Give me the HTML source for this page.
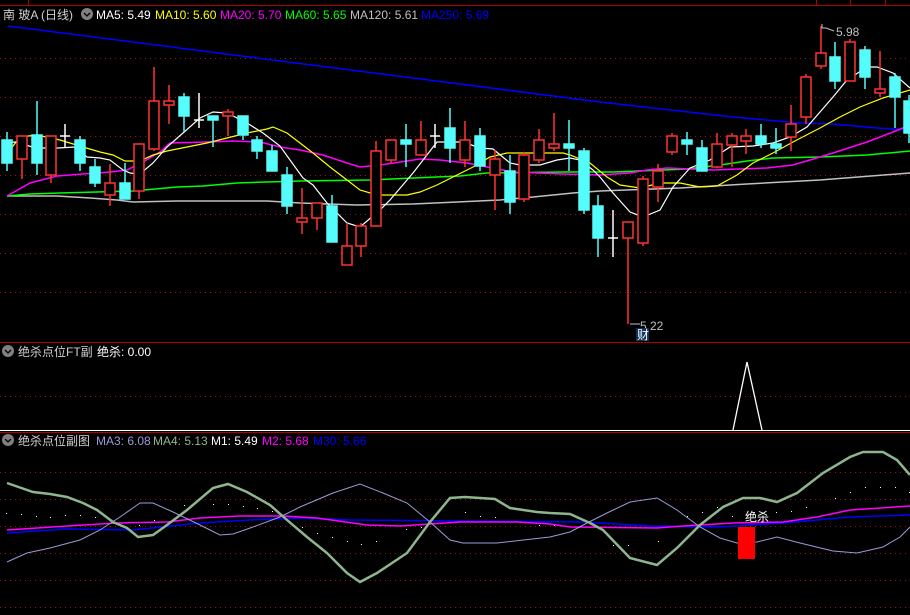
<!DOCTYPE html>
<html><head><meta charset="utf-8"><style>
html,body{margin:0;padding:0;background:#000;width:910px;height:615px;overflow:hidden}
svg{display:block}
text{font-family:"Liberation Sans","Noto Sans CJK SC",sans-serif;font-size:12px}
</style></head><body>
<svg width="910" height="615" viewBox="0 0 910 615" xmlns="http://www.w3.org/2000/svg">
<rect width="910" height="615" fill="#000"/>
<!-- top bar -->
<line x1="0" y1="5.5" x2="910" y2="5.5" stroke="#b00000"/>
<line x1="816.5" y1="0" x2="816.5" y2="5" stroke="#b00000"/>
<line x1="850.5" y1="0" x2="850.5" y2="5" stroke="#b00000"/>
<line x1="885.5" y1="0" x2="885.5" y2="5" stroke="#b00000"/>
<line x1="28.5" y1="0" x2="28.5" y2="5" stroke="#b00000"/>
<!-- grids -->
<g stroke="#a01010" stroke-dasharray="1 4">
<line x1="0" y1="58.5" x2="910" y2="58.5"/><line x1="0" y1="97.5" x2="910" y2="97.5"/>
<line x1="0" y1="136.5" x2="910" y2="136.5"/><line x1="0" y1="175.5" x2="910" y2="175.5"/>
<line x1="0" y1="214.5" x2="910" y2="214.5"/><line x1="0" y1="253.5" x2="910" y2="253.5"/>
<line x1="0" y1="292.5" x2="910" y2="292.5"/>
<line x1="0" y1="396.5" x2="910" y2="396.5"/>
<line x1="0" y1="472.5" x2="910" y2="472.5"/><line x1="0" y1="499.5" x2="910" y2="499.5"/>
<line x1="0" y1="526.5" x2="910" y2="526.5"/><line x1="0" y1="553.5" x2="910" y2="553.5"/>
<line x1="0" y1="580.5" x2="910" y2="580.5"/><line x1="0" y1="607.5" x2="910" y2="607.5"/>
</g>
<line x1="0" y1="342.5" x2="910" y2="342.5" stroke="#b00000"/>
<line x1="0" y1="432.5" x2="910" y2="432.5" stroke="#b00000"/>

<!-- MA250 blue -->
<polyline fill="none" stroke="#0000ff" stroke-width="1.5" points="8,26 600,102 733,117 800,123 833,124 877,128 910,130"/>
<!-- MA120 gray -->
<polyline fill="none" stroke="#c0c0c0" stroke-width="1.5" points="7,196 57,196 90,198 117,200 133,202 177,201 267,201 300,203 357,205 413,204 457,202 500,200 533,197 573,193 600,191 680,188 747,184 820,180 910,173"/>
<!-- MA60 green -->
<polyline fill="none" stroke="#00ff00" stroke-width="1.5" points="7,196 30,194 60,193 133,191 177,187 203,186 237,183 267,182 300,181 370,180 413,178 460,176 487,173 563,172 613,172 663,170 687,169 720,165 747,161 773,158 820,157 867,155 910,151"/>
<!-- MA20 magenta -->
<polyline fill="none" stroke="#ff00ff" stroke-width="1.5" points="7,196 30,183 57,176 83,174 110,172 127,170 143,162 160,152 170,143 207,142 233,141 260,142 280,147 300,150 323,155 347,163 360,167 380,165 407,161 420,159 440,160 467,163 487,167 513,172 563,174 600,175 630,173 647,170 667,168 713,170 767,168 793,165 820,157 833,153 867,142 893,132 910,125"/>
<!-- MA10 yellow -->
<polyline fill="none" stroke="#ffff00" stroke-width="1.2" points="6,155 20,137 37,135 60,140 83,147 100,152 113,155 125,161 140,161 153,155 167,151 187,147 207,143 227,138 247,133 267,129 273,127 287,133 300,143 313,153 330,167 347,180 360,190 377,195 407,195 420,192 437,185 453,177 473,167 490,157 507,153 563,153 570,155 590,163 607,177 620,185 640,188 660,183 680,183 700,187 717,186 737,175 753,163 773,153 793,142 820,128 840,117 860,107 883,98 910,90"/>
<!-- MA5 white -->
<polyline fill="none" stroke="#ffffff" stroke-width="1.2" points="6,143 15,142 36,148 58,148 75,147 87,157 100,158 110,160 123,170 130,173 140,174 153,163 167,147 183,133 200,118 213,112 227,113 247,123 263,133 280,146 290,160 303,178 313,185 327,203 347,223 360,227 380,210 390,200 413,173 437,142 463,142 480,148 493,149 510,163 520,165 540,165 557,160 570,158 580,160 593,170 600,177 613,193 630,212 643,217 660,210 673,187 690,168 710,160 730,147 753,146 773,143 790,137 807,127 820,112 833,97 847,80 867,67 877,67 893,73 910,88"/>

<!-- candles -->
<g stroke-width="1.5">
<g stroke="#54fcfc" fill="#54fcfc">
<line x1="7" y1="132" x2="7" y2="171"/><rect x="2" y="140" width="10" height="23"/>
<line x1="37" y1="101" x2="37" y2="175"/><rect x="32" y="135" width="10" height="28"/>
<line x1="80" y1="136" x2="80" y2="171"/><rect x="75" y="140" width="10" height="23"/>
<line x1="95" y1="159" x2="95" y2="187"/><rect x="90" y="167" width="10" height="16"/>
<line x1="125" y1="163" x2="125" y2="199"/><rect x="120" y="183" width="10" height="16"/>
<line x1="184" y1="93" x2="184" y2="132"/><rect x="179" y="97" width="10" height="19"/>
<line x1="213" y1="116" x2="213" y2="147"/><rect x="208" y="116" width="10" height="4"/>
<line x1="243" y1="116" x2="243" y2="140"/><rect x="238" y="116" width="10" height="19"/>
<line x1="257" y1="136" x2="257" y2="159"/><rect x="252" y="140" width="10" height="11"/>
<line x1="272" y1="145" x2="272" y2="171"/><rect x="267" y="151" width="10" height="20"/>
<line x1="287" y1="167" x2="287" y2="214"/><rect x="282" y="175" width="10" height="31"/>
<line x1="332" y1="195" x2="332" y2="242"/><rect x="327" y="206" width="10" height="36"/>
<line x1="406" y1="124" x2="406" y2="167"/><rect x="401" y="140" width="10" height="4"/>
<line x1="450" y1="108" x2="450" y2="163"/><rect x="445" y="128" width="10" height="20"/>
<line x1="480" y1="128" x2="480" y2="171"/><rect x="475" y="136" width="10" height="30"/>
<line x1="510" y1="155" x2="510" y2="214"/><rect x="505" y="171" width="10" height="31"/>
<line x1="569" y1="120" x2="569" y2="171"/><rect x="564" y="144" width="10" height="4"/>
<line x1="584" y1="148" x2="584" y2="214"/><rect x="579" y="151" width="10" height="59"/>
<line x1="598" y1="195" x2="598" y2="257"/><rect x="593" y="206" width="10" height="32"/>
<line x1="687" y1="132" x2="687" y2="155"/><rect x="682" y="140" width="10" height="4"/>
<line x1="702" y1="140" x2="702" y2="171"/><rect x="697" y="148" width="10" height="23"/>
<line x1="761" y1="124" x2="761" y2="148"/><rect x="756" y="136" width="10" height="8"/>
<line x1="776" y1="128" x2="776" y2="154"/><rect x="771" y="144" width="10" height="4"/>
<line x1="835" y1="42" x2="835" y2="89"/><rect x="830" y="57" width="10" height="24"/>
<line x1="865" y1="46" x2="865" y2="89"/><rect x="860" y="50" width="10" height="27"/>
<line x1="895" y1="73" x2="895" y2="128"/><rect x="890" y="77" width="10" height="20"/>
<line x1="909" y1="95" x2="909" y2="143"/><rect x="904" y="101" width="10" height="32"/>
</g>
<g stroke="#ff3232" fill="#000">
<line x1="22" y1="136" x2="22" y2="179"/><rect x="17" y="136" width="10" height="23"/>
<line x1="51" y1="136" x2="51" y2="183"/><rect x="46" y="136" width="10" height="39"/>
<line x1="110" y1="164" x2="110" y2="206"/><rect x="105" y="183" width="10" height="12"/>
<line x1="139" y1="144" x2="139" y2="199"/><rect x="134" y="144" width="10" height="47"/>
<line x1="154" y1="67" x2="154" y2="151"/><rect x="149" y="101" width="10" height="48"/>
<line x1="169" y1="85" x2="169" y2="124"/><rect x="164" y="101" width="10" height="4"/>
<line x1="228" y1="109" x2="228" y2="136"/><rect x="223" y="112" width="10" height="4"/>
<line x1="302" y1="188" x2="302" y2="234"/><rect x="297" y="218" width="10" height="4"/>
<line x1="317" y1="203" x2="317" y2="230"/><rect x="312" y="203" width="10" height="15"/>
<line x1="347" y1="223" x2="347" y2="265"/><rect x="342" y="246" width="10" height="19"/>
<line x1="361" y1="223" x2="361" y2="257"/><rect x="356" y="226" width="10" height="20"/>
<line x1="376" y1="141" x2="376" y2="226"/><rect x="371" y="151" width="10" height="75"/>
<line x1="391" y1="140" x2="391" y2="163"/><rect x="386" y="140" width="10" height="20"/>
<line x1="421" y1="121" x2="421" y2="155"/><rect x="416" y="140" width="10" height="15"/>
<line x1="465" y1="121" x2="465" y2="167"/><rect x="460" y="140" width="10" height="20"/>
<line x1="495" y1="150" x2="495" y2="210"/><rect x="490" y="159" width="10" height="16"/>
<line x1="524" y1="152" x2="524" y2="202"/><rect x="519" y="155" width="10" height="44"/>
<line x1="539" y1="129" x2="539" y2="163"/><rect x="534" y="140" width="10" height="20"/>
<line x1="554" y1="113" x2="554" y2="151"/><rect x="549" y="144" width="10" height="4"/>
<line x1="628" y1="222" x2="628" y2="324"/><rect x="623" y="222" width="10" height="16"/>
<line x1="643" y1="176" x2="643" y2="246"/><rect x="638" y="179" width="10" height="64"/>
<line x1="658" y1="164" x2="658" y2="202"/><rect x="653" y="171" width="10" height="16"/>
<line x1="672" y1="133" x2="672" y2="155"/><rect x="667" y="136" width="10" height="16"/>
<line x1="717" y1="133" x2="717" y2="168"/><rect x="712" y="144" width="10" height="23"/>
<line x1="732" y1="133" x2="732" y2="167"/><rect x="727" y="136" width="10" height="9"/>
<line x1="746" y1="129" x2="746" y2="154"/><rect x="741" y="136" width="10" height="5"/>
<line x1="791" y1="105" x2="791" y2="151"/><rect x="786" y="124" width="10" height="13"/>
<line x1="806" y1="74" x2="806" y2="124"/><rect x="801" y="77" width="10" height="40"/>
<line x1="821" y1="26" x2="821" y2="69"/><rect x="816" y="53" width="10" height="13"/>
<line x1="850" y1="39" x2="850" y2="81"/><rect x="845" y="42" width="10" height="39"/>
<line x1="880" y1="51" x2="880" y2="97"/><rect x="875" y="89" width="10" height="4"/>
</g>
<g stroke="#ffffff">
<line x1="65" y1="124" x2="65" y2="147"/><line x1="60" y1="136" x2="70" y2="136"/>
<line x1="199" y1="93" x2="199" y2="128"/><line x1="194" y1="120" x2="204" y2="120"/>
<line x1="435" y1="124" x2="435" y2="148"/><line x1="430" y1="136" x2="440" y2="136"/>
<line x1="613" y1="210" x2="613" y2="257"/><line x1="608" y1="238" x2="618" y2="238"/>
</g>
</g>
<!-- labels -->
<polyline fill="none" stroke="#c0c0c0" stroke-width="1" points="822,24 822,28 826,28 834,31"/>
<text x="836" y="36" fill="#c0c0c0">5.98</text>
<line x1="630" y1="324" x2="640" y2="324" stroke="#c0c0c0"/>
<text x="640" y="330" fill="#c0c0c0">5.22</text>
<rect x="636" y="328" width="13" height="13" fill="#10305a"/>
<text x="637" y="339" fill="#ffffff" font-size="11">财</text>

<!-- header 1 -->
<text x="3" y="19" fill="#d0d0d0" font-size="13">南 玻A (日线)</text>
<circle cx="87" cy="14" r="6" fill="#808080"/><polyline points="84,13 87,16 90,13" fill="none" stroke="#000" stroke-width="1.3"/>
<text x="96" y="19" fill="#ffffff">MA5: 5.49</text>
<text x="155" y="19" fill="#ffff00">MA10: 5.60</text>
<text x="220" y="19" fill="#ff00ff">MA20: 5.70</text>
<text x="285" y="19" fill="#00ff00">MA60: 5.65</text>
<text x="350" y="19" fill="#c0c0c0">MA120: 5.61</text>
<text x="421" y="19" fill="#0000ff">MA250: 5.69</text>

<!-- panel 2 -->
<circle cx="8" cy="351" r="6" fill="#808080"/><polyline points="5,350 8,353 11,350" fill="none" stroke="#000" stroke-width="1.3"/>
<text x="18" y="356" fill="#d0d0d0">绝杀点位FT副</text>
<text x="97" y="356" fill="#ffffff">绝杀: 0.00</text>
<line x1="0" y1="430.5" x2="910" y2="430.5" stroke="#ffffff"/>
<polyline fill="none" stroke="#ffffff" stroke-width="1.3" points="733,430 747,362 762,430"/>

<!-- panel 3 header -->
<circle cx="8" cy="440" r="6" fill="#808080"/><polyline points="5,439 8,442 11,439" fill="none" stroke="#000" stroke-width="1.3"/>
<text x="18" y="445" fill="#d0d0d0">绝杀点位副图</text>
<text x="96" y="445" fill="#9a9ad8">MA3: 6.08</text>
<text x="153" y="445" fill="#8fb58f">MA4: 5.13</text>
<text x="211" y="445" fill="#ffffff">M1: 5.49</text>
<text x="262" y="445" fill="#ff00ff">M2: 5.68</text>
<text x="313" y="445" fill="#0000ff">M30: 5.66</text>

<!-- dots -->
<g fill="#ffffff">
<rect x="6" y="513" width="1" height="1"/><rect x="21" y="514" width="1" height="1"/><rect x="36" y="516" width="1" height="1"/><rect x="50" y="517" width="1" height="1"/><rect x="65" y="515" width="1" height="1"/><rect x="80" y="515" width="1" height="1"/><rect x="95" y="517" width="1" height="1"/><rect x="139" y="525" width="1" height="1"/><rect x="154" y="520" width="1" height="1"/><rect x="184" y="505" width="1" height="1"/><rect x="213" y="504" width="1" height="1"/><rect x="228" y="504" width="1" height="1"/><rect x="243" y="506" width="1" height="1"/><rect x="257" y="508" width="1" height="1"/><rect x="272" y="511" width="1" height="1"/><rect x="302" y="527" width="1" height="1"/><rect x="317" y="533" width="1" height="1"/><rect x="332" y="537" width="1" height="1"/><rect x="347" y="541" width="1" height="1"/><rect x="361" y="544" width="1" height="1"/><rect x="376" y="541" width="1" height="1"/><rect x="406" y="529" width="1" height="1"/><rect x="421" y="527" width="1" height="1"/><rect x="465" y="512" width="1" height="1"/><rect x="480" y="516" width="1" height="1"/><rect x="495" y="517" width="1" height="1"/><rect x="524" y="522" width="1" height="1"/><rect x="539" y="525" width="1" height="1"/><rect x="554" y="525" width="1" height="1"/><rect x="613" y="545" width="1" height="1"/><rect x="628" y="545" width="1" height="1"/><rect x="658" y="541" width="1" height="1"/><rect x="687" y="516" width="1" height="1"/><rect x="702" y="512" width="1" height="1"/><rect x="717" y="507" width="1" height="1"/><rect x="732" y="516" width="1" height="1"/><rect x="776" y="512" width="1" height="1"/><rect x="791" y="511" width="1" height="1"/><rect x="806" y="507" width="1" height="1"/><rect x="835" y="498" width="1" height="1"/><rect x="850" y="492" width="1" height="1"/><rect x="865" y="487" width="1" height="1"/><rect x="880" y="487" width="1" height="1"/><rect x="895" y="487" width="1" height="1"/><rect x="909" y="492" width="1" height="1"/>
</g>
<!-- M30 blue -->
<polyline fill="none" stroke="#0000ff" stroke-width="1.5" points="7,533 67,529 133,530 200,523 250,520 300,518 350,520 460,521 583,522 650,526 717,527 783,523 850,517 910,515"/>
<!-- M2 magenta -->
<polyline fill="none" stroke="#ff00ff" stroke-width="1.5" points="7,530 67,526 117,523 167,522 200,518 240,516 283,516 317,518 367,525 400,526 460,522 517,522 550,524 570,527 657,528 683,526 733,523 783,522 817,517 850,510 910,506"/>
<!-- MA3 lavender -->
<polyline fill="none" stroke="#9a9ad8" stroke-width="1" points="7,562 27,553 50,548 80,540 100,530 120,517 140,503 153,503 173,512 200,525 220,535 233,534 253,527 280,517 300,507 333,493 360,484 383,493 407,503 430,522 450,540 463,543 497,543 550,537 570,532 587,523 607,513 630,502 657,498 677,510 700,527 720,538 737,543 757,542 777,537 800,543 833,551 857,553 883,547 900,537 910,527"/>
<!-- MA4 green thick -->
<polyline fill="none" stroke="#8fb58f" stroke-width="2.5" points="7,483 33,492 50,494 67,497 83,503 97,510 113,522 127,528 138,537 153,535 167,525 187,510 213,488 228,484 247,492 270,505 287,520 307,537 327,553 347,573 360,582 377,573 407,553 430,522 450,498 465,497 495,499 510,508 537,512 550,513 570,514 590,523 603,530 630,558 657,565 677,548 700,525 723,507 743,498 760,498 777,502 797,493 823,473 850,457 863,452 883,452 897,460 910,475"/>
<!-- signal -->
<rect x="738" y="527" width="17" height="32" fill="#ff0000"/>
<text x="745" y="521" fill="#ffffff" font-size="13">绝杀</text>
</svg>
</body></html>
